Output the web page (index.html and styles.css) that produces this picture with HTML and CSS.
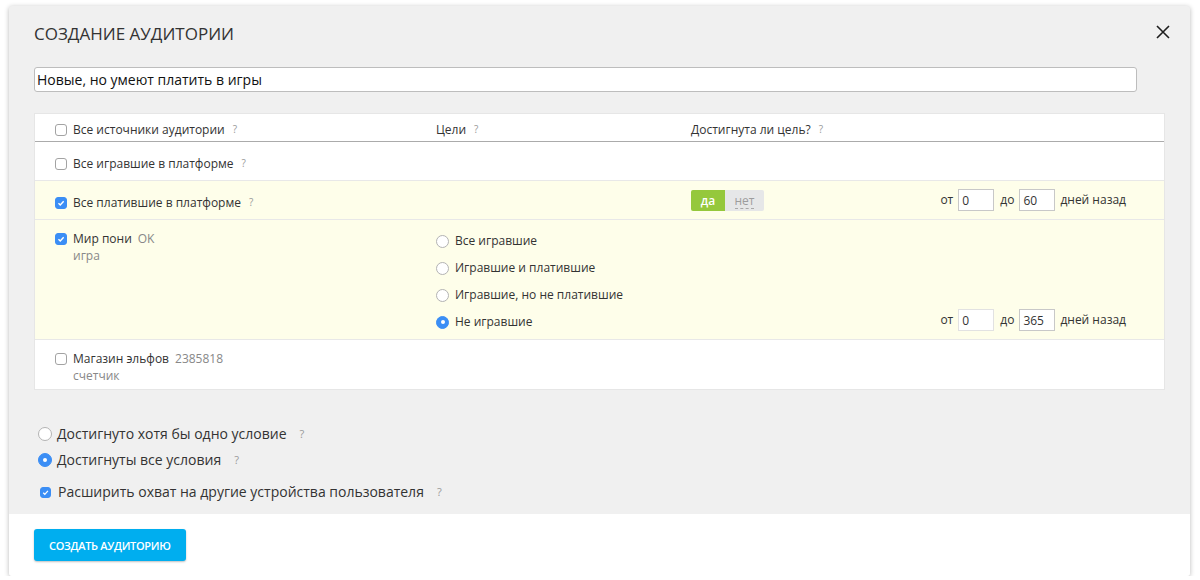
FILE: index.html
```html
<!DOCTYPE html>
<html lang="ru">
<head>
<meta charset="utf-8">
<title>Создание аудитории</title>
<link rel="stylesheet" href="styles.css">
</head>
<body>
<div class="modal">
  <div class="modal-main">
    <div class="modal-head">
      <h1 class="title">СОЗДАНИЕ АУДИТОРИИ</h1>
      <button class="close" type="button" aria-label="Закрыть">
        <svg width="14" height="14" viewBox="0 0 14 14"><path d="M1 1L13 13M13 1L1 13" stroke="#1e1e1e" stroke-width="1.6" fill="none"/></svg>
      </button>
    </div>
    <input class="name-input" type="text" value="Новые, но умеют платить в игры">

    <div class="sources">
      <div class="row row-head">
        <div class="src"><span class="cb"></span><span class="name">Все источники аудитории</span><span class="q">?</span></div>
        <div class="hcell">Цели<span class="q">?</span></div>
        <div class="hcell">Достигнута ли цель?<span class="q">?</span></div>
      </div>

      <div class="row">
        <div class="src src-single"><span class="cb"></span><span class="name">Все игравшие в платформе</span><span class="q">?</span></div>
      </div>

      <div class="row row-on">
        <div class="src src-single"><span class="cb cb-on"><svg viewBox="0 0 12 12"><path d="M3 6.3L5.1 8.4L9.2 3.8" stroke="#fff" stroke-width="1.7" fill="none"/></svg></span><span class="name">Все платившие в платформе</span><span class="q">?</span></div>
        <div class="toggle"><span class="tg tg-yes">да</span><span class="tg tg-no"><span class="dash">нет</span></span></div>
        <div class="range"><span>от</span><input class="num" type="text" value="0"><span class="to">до</span><input class="num" type="text" value="60"><span>дней назад</span></div>
      </div>

      <div class="row row-on row-tall">
        <div class="src src-double"><span class="cb cb-on"><svg viewBox="0 0 12 12"><path d="M3 6.3L5.1 8.4L9.2 3.8" stroke="#fff" stroke-width="1.7" fill="none"/></svg></span>
          <div class="src-text"><div><span class="name">Мир пони</span><span class="meta">OK</span></div><div class="meta sub">игра</div></div>
        </div>
        <ul class="goals">
          <li><span class="rd"></span>Все игравшие</li>
          <li><span class="rd"></span>Игравшие и платившие</li>
          <li><span class="rd"></span>Игравшие, но не платившие</li>
          <li><span class="rd rd-on"></span>Не игравшие</li>
        </ul>
        <div class="range range-end"><span>от</span><input class="num num-light" type="text" value="0"><span class="to">до</span><input class="num" type="text" value="365"><span>дней назад</span></div>
      </div>

      <div class="row row-last">
        <div class="src src-double"><span class="cb"></span>
          <div class="src-text"><div><span class="name">Магазин эльфов</span><span class="meta">2385818</span></div><div class="meta sub">счетчик</div></div>
        </div>
      </div>
    </div>

    <div class="options">
      <div class="opt"><span class="rd rd-big"></span>Достигнуто хотя бы одно условие<span class="q q-big">?</span></div>
      <div class="opt"><span class="rd rd-big rd-on"></span>Достигнуты все условия<span class="q q-big">?</span></div>
      <div class="opt opt-check"><span class="cb cb-on cb-bottom"><svg viewBox="0 0 12 12"><path d="M3 6.3L5.1 8.4L9.2 3.8" stroke="#fff" stroke-width="1.7" fill="none"/></svg></span>Расширить охват на другие устройства пользователя<span class="q q-big">?</span></div>
    </div>
  </div>
  <div class="modal-foot">
    <button class="btn" type="button">СОЗДАТЬ АУДИТОРИЮ</button>
  </div>
</div>
</body>
</html>
```

FILE: styles.css
```css
html, body {
  margin: 0;
  padding: 0;
  background: #fff;
}

body {
  font-family: "Open Sans", "Liberation Sans", sans-serif;
  color: #333;
}

.modal {
  width: 1181px;
  margin: 6px 0 0 9px;
  background: #f0f0f0;
  border-radius: 3px;
  box-shadow: 0 1px 5px rgba(0, 0, 0, 0.28);
  overflow: hidden;
}

.modal-main {
  padding: 16px 25px 12px;
}

.modal-head {
  display: flex;
  justify-content: space-between;
  align-items: flex-start;
}

.title {
  margin: 0;
  font-size: 17px;
  line-height: 24px;
  font-weight: 400;
  color: #333;
}

.close {
  margin: 3px -5px 0 0;
  padding: 0;
  border: 0;
  background: none;
  width: 14px;
  height: 14px;
  display: block;
  cursor: pointer;
}

.close svg {
  display: block;
}

.name-input {
  display: block;
  box-sizing: border-box;
  width: 1103px;
  height: 25px;
  margin-top: 21px;
  padding: 0 2px;
  border: 1px solid #bdbdbd;
  border-radius: 3px;
  background: #fff;
  font-family: "Open Sans", "Liberation Sans", sans-serif;
  font-size: 14px;
  color: #111;
  outline: none;
}

.sources {
  margin-top: 21px;
  background: #fff;
  border: 1px solid #e6e6e6;
  font-size: 12px;
  line-height: 18px;
  color: #333;
}

.row {
  display: grid;
  grid-template-columns: 381px 255px auto 1fr;
  align-items: start;
  padding: 8px 38px 7px 20px;
  border-bottom: 1px solid #e8e8e8;
}

.row-head {
  padding: 7px 38px 2px 20px;
  border-bottom: 1px solid #ababab;
}

.row-on {
  background: #fefeea;
}

.row-tall {
  padding-bottom: 8px;
}

.row-last {
  border-bottom: 0;
  padding-bottom: 5px;
}

.src {
  grid-column: 1;
  display: flex;
  align-items: flex-start;
}

.src-single {
  padding-top: 5px;
}

.src-double {
  padding-top: 2px;
  line-height: 17px;
}

.src-double .cb {
  margin-top: 3px;
}

.cb {
  flex: none;
  box-sizing: border-box;
  width: 12px;
  height: 12px;
  margin: 3px 6px 0 0;
  border: 1px solid #a3a3a3;
  border-radius: 3px;
  background: #fff;
  display: inline-flex;
}

.cb svg {
  width: 100%;
  height: 100%;
  display: block;
}

.cb-on {
  background: #3b8ef5;
  border-color: #3b8ef5;
}

.meta {
  color: #888;
  margin-left: 6px;
}

.meta.sub {
  margin-left: 0;
}

.q {
  color: #9a9a9a;
  font-size: 10px;
  margin-left: 8px;
  position: relative;
  top: -1px;
}

.hcell {
  white-space: nowrap;
}

.toggle {
  grid-column: 3;
  display: flex;
  height: 21px;
  margin-top: 1px;
  border-radius: 2px;
  overflow: hidden;
  font-size: 12px;
  line-height: 21px;
}

.tg {
  display: block;
  text-align: center;
}

.tg-yes {
  width: 34px;
  background: #95c83c;
  color: #fff;
  font-weight: 600;
}

.tg-no {
  width: 39px;
  background: #e6e7e8;
  color: #9d9d9d;
}

.dash {
  border-bottom: 1px dashed #a8a8a8;
  line-height: 14px;
  display: inline-block;
}

.goals {
  grid-column: 2;
  list-style: none;
  margin: 0;
  padding: 4px 0 0;
  display: flex;
  flex-direction: column;
  gap: 9px;
}

.goals li {
  display: flex;
  align-items: center;
  height: 18px;
}

.range {
  grid-column: 4;
  justify-self: end;
  display: flex;
  align-items: center;
  gap: 5px;
  white-space: nowrap;
}

.range-end {
  align-self: end;
}

.range .to {
  margin-left: 1px;
}

.num {
  box-sizing: border-box;
  width: 36px;
  height: 22px;
  padding: 0 3px;
  border: 1px solid #c8c8c8;
  background: #fff;
  font-family: "Open Sans", "Liberation Sans", sans-serif;
  font-size: 12px;
  color: #333;
  outline: none;
}

.num-light {
  border-color: #e2e2e2;
}

.rd {
  flex: none;
  box-sizing: border-box;
  width: 13px;
  height: 13px;
  margin-right: 6px;
  border: 1px solid #b3b3b3;
  border-radius: 50%;
  background: #fff;
  position: relative;
}

.rd-on {
  background: #3b8ef5;
  border-color: #3b8ef5;
}

.rd-on::after {
  content: "";
  position: absolute;
  left: 50%;
  top: 50%;
  width: 4px;
  height: 4px;
  margin: -2px 0 0 -2px;
  border-radius: 50%;
  background: #fff;
}

.options {
  margin-top: 34px;
  padding-left: 4px;
  display: flex;
  flex-direction: column;
  gap: 6px;
  font-size: 14px;
  line-height: 20px;
  color: #333;
}

.opt {
  display: flex;
  align-items: center;
}

.rd-big {
  width: 14px;
  height: 14px;
  margin-right: 5px;
}

.opt-check {
  margin-top: 6px;
}

.cb-bottom {
  width: 11px;
  height: 11px;
  margin: 0 7px 0 2px;
}

.q-big {
  font-size: 11px;
  margin-left: 13px;
  top: 0;
}

.modal-foot {
  background: #fff;
  padding: 15px 25px;
}

.btn {
  display: block;
  height: 32px;
  padding: 0 15px;
  border: 0;
  border-radius: 3px;
  background: #00aeef;
  color: #fff;
  font-family: "Open Sans", "Liberation Sans", sans-serif;
  font-size: 11px;
  font-weight: 600;
  letter-spacing: -0.3px;
  box-shadow: 0 1px 2px rgba(0, 0, 0, 0.25);
  cursor: pointer;
}
```
